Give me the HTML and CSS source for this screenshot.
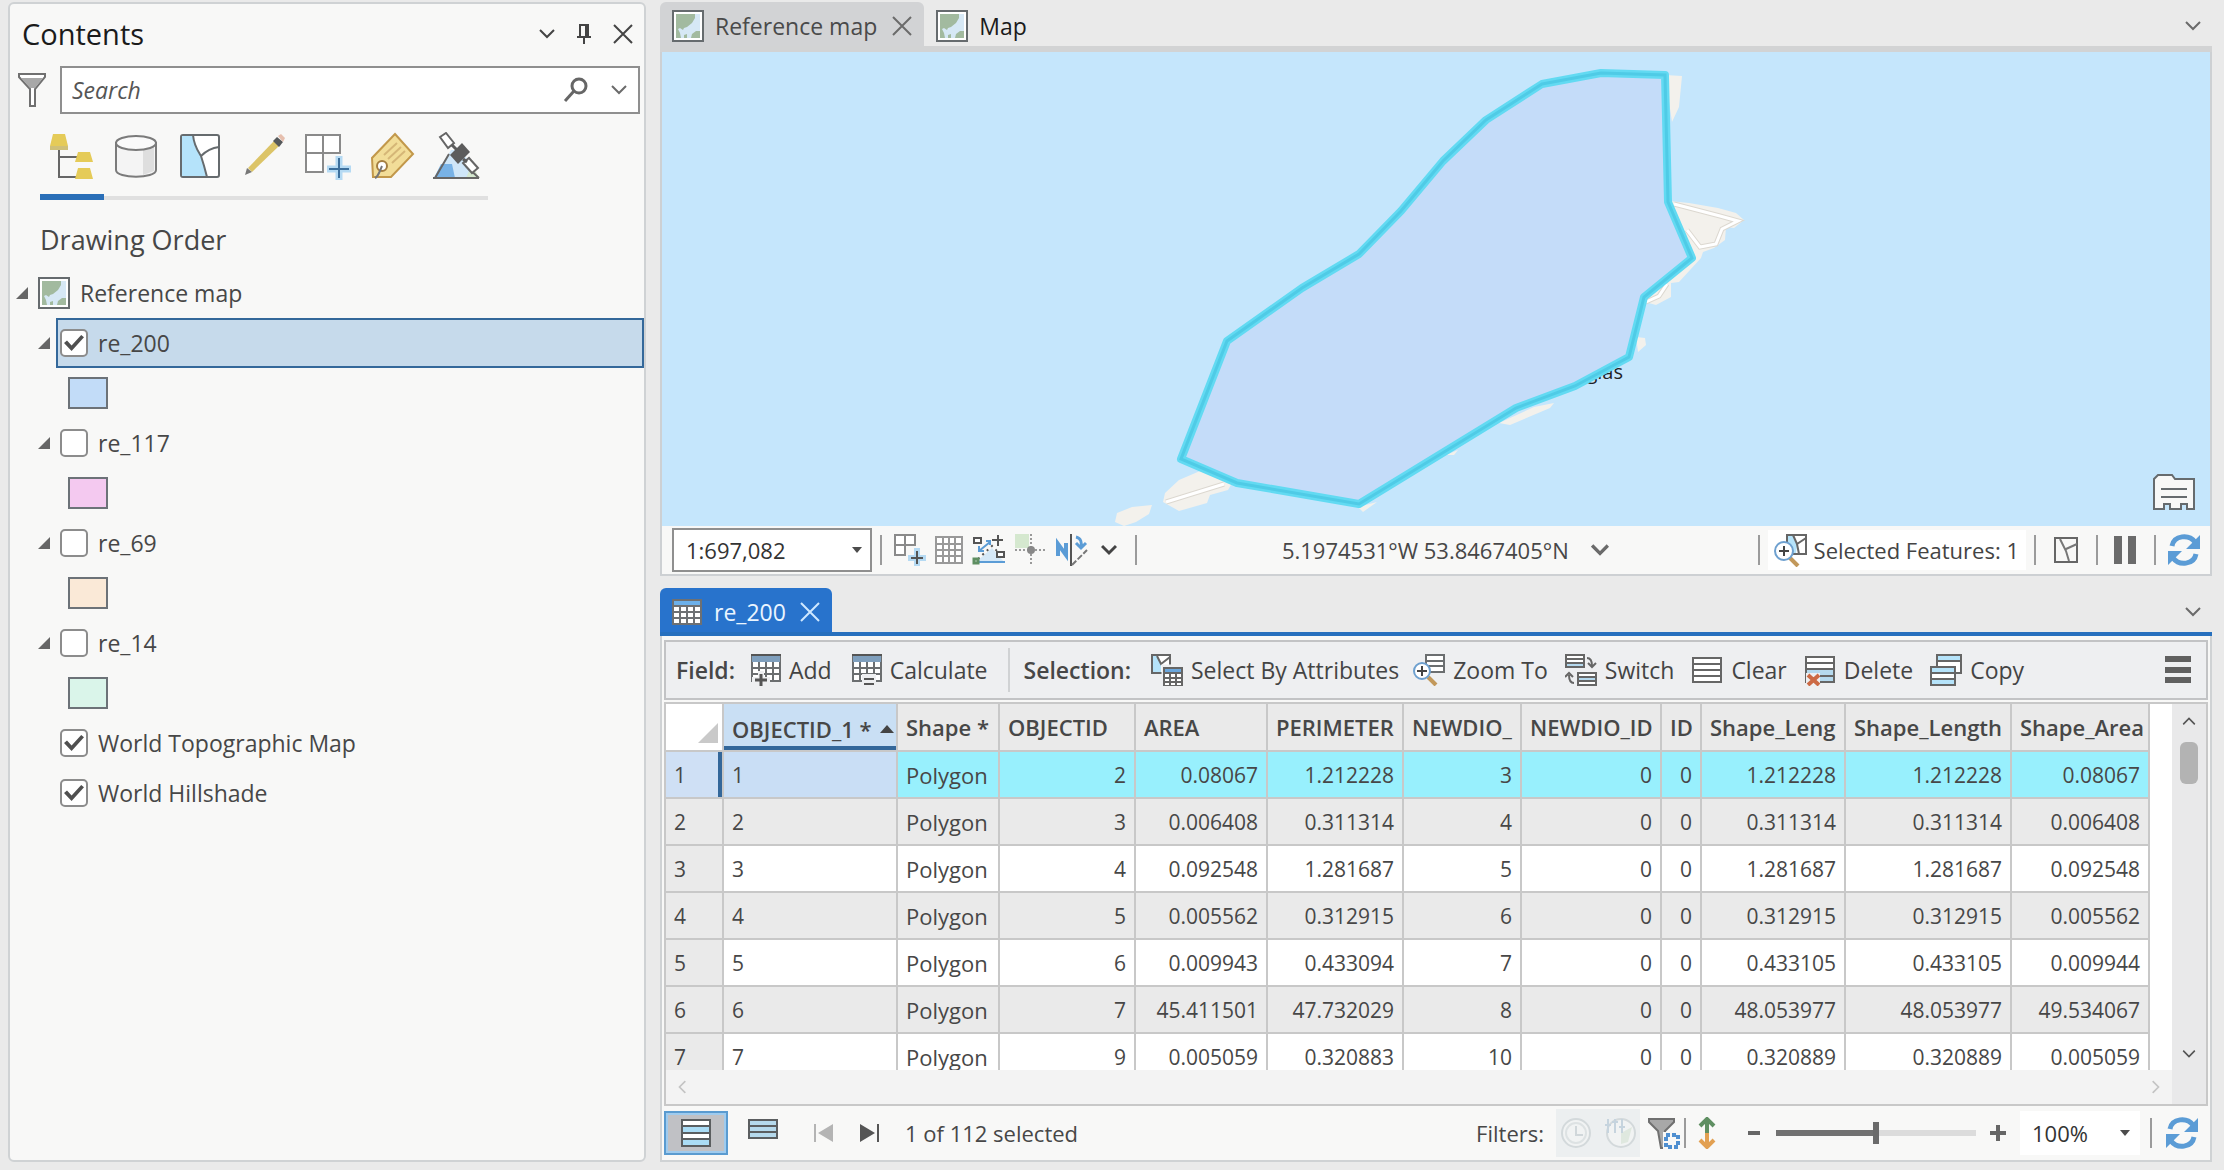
FILE: index.html
```html
<!DOCTYPE html>
<html lang="en">
<head>
<meta charset="utf-8">
<title>Reference map</title>
<link rel="stylesheet" href="styles.css">
</head>
<body>
<svg class="defs" aria-hidden="true">
  <symbol id="map-icon" viewBox="0 0 32 32"><path fill="#fff" stroke="#666b6e" stroke-width="2" d="M1 1h30v30H1z"/><path fill="#d6e8f5" d="M4 4h24v24H4z"/><path fill="#a2ba9f" d="M4 4h19v4l-3 5-5 4-3 1-1 2-3-2-2 1 2 4 1 5H4zM28 21v7h-9l1-4 4-3zM12 25l3-1v4h-3z"/></symbol>
  <symbol id="chevron" viewBox="0 0 16 12"><path fill="none" stroke="currentColor" stroke-width="2" d="M1 2l7 7 7-7"/></symbol>
  <symbol id="chevron-bold" viewBox="0 0 16 12"><path fill="none" stroke="currentColor" stroke-width="3" d="M1 2l7 7 7-7"/></symbol>
  <symbol id="cross" viewBox="0 0 20 20"><path fill="none" stroke="currentColor" stroke-width="2" d="M1 1l18 18M19 1L1 19"/></symbol>
  <symbol id="refresh" viewBox="0 0 32 32"><path fill="none" stroke="#5b9cd6" stroke-width="5" d="M4 12c2-11 17-12 23-4M28 20c-2 11-17 12-23 4"/><path fill="#5b9cd6" d="M32 1v14H18zM0 31V17h14z"/></symbol>
  <symbol id="drop" viewBox="0 0 10 6"><path fill="#4c4c4c" d="M0 0h10L5 6z"/></symbol>
  <symbol id="tri" viewBox="0 0 12 12"><path fill="#666" d="M12 0v12H0z"/></symbol>
</svg>
<div class="app">
  <aside class="contents">
    <header class="contents-head">
      <h1>Contents</h1>
      <button class="bare" aria-label="Options"><svg width="16" height="12"><use href="#chevron"/></svg></button>
      <button class="bare" aria-label="Pin"><svg width="14" height="20" viewBox="0 0 14 20"><path fill="none" stroke="#444" stroke-width="2" d="M3 13V1h8v12M0 13h14M7 13v7M9 1v12"/></svg></button>
      <button class="bare" aria-label="Close"><svg width="20" height="20"><use href="#cross"/></svg></button>
    </header>
    <div class="search-row">
      <svg width="28" height="34" viewBox="0 0 28 34"><path fill="#fff" stroke="#707070" stroke-width="2" d="M1 1h26v3L17 16v17h-5V16L1 4z"/><path fill="#a8a8a8" d="M3 5h22l-8 10h-5z"/></svg>
      <div class="search-box">
        <input type="text" placeholder="Search" aria-label="Search">
        <button class="bare" aria-label="Find"><svg width="26" height="26" viewBox="0 0 26 26"><circle cx="16" cy="9" r="7" fill="none" stroke="#666" stroke-width="3"/><path stroke="#666" stroke-width="3" d="M11 14L2 24"/></svg></button>
        <button class="bare dim" aria-label="Search options"><svg width="16" height="12"><use href="#chevron"/></svg></button>
      </div>
    </div>
    <nav class="tabs" aria-label="List by">
      <button class="on" aria-label="Drawing order"><svg width="48" height="48" viewBox="0 0 48 48"><path fill="none" stroke="#666" stroke-width="2" d="M11 17v28h20M11 25h18"/><path fill="#e5cb58" d="M5 2h12l3 12H2zM30 20h12l3 10H27zM30 36h12l3 11H27z"/><path fill="#cfc078" d="M2 14h18v4H2z"/></svg></button>
      <button aria-label="Data source"><svg width="48" height="48" viewBox="0 0 48 48"><path fill="#f4f4f4" stroke="#7b7b7b" stroke-width="2" d="M4 10v28c0 9 40 9 40 0V10"/><path fill="#dedede" d="M31 17l11-4v26l-11 4z"/><ellipse cx="24" cy="11" rx="20" ry="7" fill="#fafafa" stroke="#7b7b7b" stroke-width="2"/></svg></button>
      <button aria-label="Selection"><svg width="48" height="48" viewBox="0 0 48 48"><rect x="5" y="3" width="38" height="42" rx="2" fill="#fff" stroke="#666b6e" stroke-width="2"/><path fill="#b5e3fa" d="M6 4h11c1 11 5 16 8 20 2 6 4 13 6 20H6z"/><path fill="none" stroke="#666b6e" stroke-width="2" d="M17 3c1 11 5 16 8 21 2 6 4 13 6 21M25 24c5-5 10-8 18-9"/></svg></button>
      <button aria-label="Editing"><svg width="48" height="48" viewBox="0 0 48 48"><path fill="#dcc467" d="M8 36L34 9l5 5-27 26z"/><path fill="#55585a" d="M33 9l4-4 6 5-4 5z"/><path fill="#e6bfae" d="M38 4l3-2 4 4-2 4z"/><path fill="#777" d="M5 43l2-7 5 4z"/></svg></button>
      <button aria-label="Snapping"><svg width="48" height="48" viewBox="0 0 48 48"><path fill="#fff" stroke="#8a8a8a" stroke-width="2" d="M2 3h34v18H19v19H2zM19 3v18M2 21h17"/><path stroke="#b5daf3" stroke-width="7" d="M35 24v24M23 37h24"/><path stroke="#3c6f9c" stroke-width="2" d="M35 26v20M25 37h20"/></svg></button>
      <button aria-label="Labeling"><svg width="48" height="48" viewBox="0 0 48 48"><path fill="#f2dd98" stroke="#c2984b" stroke-width="2" d="M27 2l18 20-22 23H5l-1-19z"/><path stroke="#d5b677" stroke-width="2" d="M16 23l13-12M20 27l13-12M24 31l13-12"/><circle cx="14" cy="34" r="5" fill="#fff" stroke="#a47e40" stroke-width="2"/><path fill="none" stroke="#777" stroke-width="2" d="M14 34c-3 7-4 11-7 12"/></svg></button>
      <button aria-label="Perspective imagery"><svg width="48" height="48" viewBox="0 0 48 48"><path fill="#cfe6f8" d="M19 18L3 46h44L29 18z"/><path fill="#78b2e6" d="M9 32h11l3 14H2z"/><path fill="#d5e8cf" d="M34 46l6-14 7 14z"/><path stroke="#666" stroke-width="2" d="M1 46h46M3 46l14-24M34 34l13 12"/><path fill="#fff" stroke="#666" stroke-width="2" d="M8 5l6-4 8 10-6 5zM31 31l6-5 9 10-6 5z"/><path fill="#5c5c5c" d="M18 23L30 11l8 9-12 12z"/><path stroke="#5c5c5c" stroke-width="3" d="M20 13l5 5M31 27l4 3"/></svg></button>
    </nav>
    <h2>Drawing Order</h2>
    <ul class="tree">
      <li class="row root"><svg width="12" height="12"><use href="#tri"/></svg><svg class="rooticon" width="32" height="32"><use href="#map-icon"/></svg><span>Reference map</span></li>
      <li class="row"><svg width="12" height="12"><use href="#tri"/></svg><label class="item picked"><input type="checkbox" checked>re_200</label></li>
      <li class="row patch"><i class="blue"></i></li>
      <li class="row"><svg width="12" height="12"><use href="#tri"/></svg><label class="item"><input type="checkbox">re_117</label></li>
      <li class="row patch"><i class="pink"></i></li>
      <li class="row"><svg width="12" height="12"><use href="#tri"/></svg><label class="item"><input type="checkbox">re_69</label></li>
      <li class="row patch"><i class="peach"></i></li>
      <li class="row"><svg width="12" height="12"><use href="#tri"/></svg><label class="item"><input type="checkbox">re_14</label></li>
      <li class="row patch"><i class="mint"></i></li>
      <li class="row leaf"><label class="item"><input type="checkbox" checked>World Topographic Map</label></li>
      <li class="row leaf"><label class="item"><input type="checkbox" checked>World Hillshade</label></li>
    </ul>
  </aside>
  <main class="views">
    <section class="pane">
      <div class="strip">
        <div class="tab active"><svg width="32" height="32"><use href="#map-icon"/></svg><span>Reference map</span><button class="bare dim" aria-label="Close tab"><svg width="20" height="20"><use href="#cross"/></svg></button></div>
        <div class="tab"><svg width="32" height="32"><use href="#map-icon"/></svg><span>Map</span></div>
        <button class="bare dim more" aria-label="Tabs"><svg width="16" height="12"><use href="#chevron"/></svg></button>
      </div>
      <div class="map-frame">
        <div class="map">
          <svg class="canvas" viewBox="0 0 1548 474" preserveAspectRatio="xMidYMid slice">
            <g fill="#f3f1ec">
              <path d="M1003 23l17 1-3 31-7 15zM1007 149l20 2 29 5 18 5 8 7-10 8-8-1-1 13-11 8-11 4-2 6-22 24-8 1v14l-15 8-11-3zM974 285l9 1 1 7-8 7zM892 351l-4 5-40 17-11-2 35-16zM796 398l-4 5h-8zM715 450l-14 10-5-5zM538 419l32 12-4 7-18 5-3 8-28 8-16-9 2-9 14-13zM490 453l-3 9-13 8-12 4-9-4 2-9 15-6z"/>
            </g>
            <path fill="none" stroke="#dcd8d0" stroke-width="5" d="M1012 152l46 12 18 5-16 8-6 15-16 3-13-17M504 450l58-18M984 250l13-6 8-12"/>
            <path fill="none" stroke="#fff" stroke-width="3" d="M1012 152l46 12 18 5-16 8-6 15-16 3-13-17M504 450l58-18M984 250l13-6 8-12"/>
            <text x="961" y="327" text-anchor="end" class="place">Douglas</text>
            <path class="feature" d="M880 32l59-11 64 2 3 127 24 56-48 39-15 60-54 29-59 22-157 96-122-21-56-24 46-118 75-53 57-34 42-43 42-50 43-41z"/>
            <path class="feature-core" d="M880 32l59-11 64 2 3 127 24 56-48 39-15 60-54 29-59 22-157 96-122-21-56-24 46-118 75-53 57-34 42-43 42-50 43-41z"/>
          </svg>
          <button class="bare note" aria-label="Map notes"><svg width="44" height="38" viewBox="0 0 44 38"><path fill="#f8f8f7" stroke="#666b6e" stroke-width="2" d="M2 36V6l4-4h14l3 4h19v30h-7v-5h-6v5H18v-5h-6v5z"/><path stroke="#666b6e" stroke-width="2" d="M9 16h26M9 24h26"/></svg></button>
        </div>
        <div class="status">
          <div class="pick scale"><select aria-label="Scale"><option>1:697,082</option></select><svg width="10" height="6"><use href="#drop"/></svg></div>
          <i class="bar"></i>
          <div class="tools">
            <button class="bare" aria-label="Constraints"><svg width="32" height="32" viewBox="0 0 32 32"><path fill="#fff" stroke="#8a8a8a" stroke-width="2" d="M1 1h20v10H11v10H1zM11 1v10M1 11h10"/><path stroke="#b5daf3" stroke-width="6" d="M23 14v18M14 24h18"/><path stroke="#555" stroke-width="2" d="M23 17v13M17 24h12"/></svg></button>
            <button class="bare" aria-label="Grid"><svg width="28" height="28" viewBox="0 0 28 28"><path fill="#fff" stroke="#999" stroke-width="2" d="M1 1h26v26H1zM8 1v26M14 1v26M20 1v26M1 8h26M1 14h26M1 20h26"/></svg></button>
            <button class="bare" aria-label="Snapping"><svg width="34" height="32" viewBox="0 0 34 32"><path fill="#d5e8f7" d="M4 28L20 14l12 14z"/><path fill="#fff" stroke="#555" stroke-width="2" d="M2 4h7v5H2zM25 18h7v5h-7z"/><path fill="none" stroke="#555" stroke-width="2" d="M26 1v11M20 6h11"/><path fill="none" stroke="#5b9cd6" stroke-width="2" d="M7 17l11-9M7 12v5h5M14 7h4v4M3 28h30"/><path fill="none" stroke="#555" stroke-width="2" stroke-dasharray="2 4" d="M6 25l14-13 6 6"/><path fill="#fff" stroke="#5f8f62" stroke-width="3" d="M2 25h4v4H2z"/></svg></button>
            <button class="bare" aria-label="Inference"><svg width="32" height="32" viewBox="0 0 32 32"><path fill="#d5e8cf" d="M0 0h14v14H0z"/><path stroke="#999" stroke-width="2" stroke-dasharray="2 2" d="M16 0v32M0 16h32"/><circle cx="16" cy="16" r="4" fill="#888"/></svg></button>
            <button class="bare" aria-label="North correction"><svg width="32" height="32" viewBox="0 0 32 32"><path fill="none" stroke="#5b9cd6" stroke-width="4" d="M2 22V10l8 11V9"/><path stroke="#555" stroke-width="2" d="M15 0v32"/><path stroke="#777" stroke-width="2" stroke-dasharray="6 2" d="M16 31l15-15"/><path fill="none" stroke="#5b9cd6" stroke-width="3" d="M20 3c5 1 6 6 5 11M20 9l5 5 5-5"/></svg></button>
            <button class="bare strong" aria-label="More tools"><svg width="16" height="12"><use href="#chevron-bold"/></svg></button>
          </div>
          <i class="bar"></i>
          <div class="coords"><span>5.1974531°W 53.8467405°N</span><button class="bare strong dim" aria-label="Units"><svg width="18" height="14" viewBox="0 0 16 12"><use href="#chevron-bold"/></svg></button></div>
          <i class="bar"></i>
          <button class="bare chosen"><svg width="34" height="34" viewBox="0 0 34 34"><path fill="#fff" stroke="#666" stroke-width="2" d="M13 2h19v19H13z"/><path fill="#b5e3fa" d="M14 3h5l4 9-1 8h-8z"/><path fill="none" stroke="#666" stroke-width="2" d="M19 2l4 9 9-6M23 11l2 10"/><path stroke="#c2985b" stroke-width="4" d="M16 25l8 8"/><circle cx="10" cy="18" r="9" fill="#fff" stroke="#6ea0cf" stroke-width="2"/><path stroke="#444" stroke-width="2" d="M10 13v10M5 18h10"/></svg><span>Selected Features: 1</span></button>
          <i class="bar"></i>
          <button class="bare sel" aria-label="Selection chart"><svg width="24" height="26" viewBox="0 0 24 26"><path fill="#f8f8f7" stroke="#666" stroke-width="2" d="M1 1h22v24H1z"/><path fill="none" stroke="#777" stroke-width="2" d="M6 2l6 12 3 10M12 12l11-5"/></svg></button>
          <i class="bar"></i>
          <button class="bare" aria-label="Pause drawing"><svg width="22" height="28" viewBox="0 0 22 28"><path fill="#6b6b6b" d="M0 0h8v28H0zM14 0h8v28h-8z"/></svg></button>
          <i class="bar"></i>
          <button class="bare" aria-label="Refresh"><svg width="32" height="32"><use href="#refresh"/></svg></button>
        </div>
      </div>
    </section>
    <section class="pane">
      <div class="strip table-strip">
        <div class="tab blue-tab"><svg width="30" height="26" viewBox="0 0 30 26"><path fill="#6d7073" d="M0 0h30v26H0z"/><path fill="#6cb0ea" d="M2 2h26v4H2z"/><path fill="#fff" d="M2 8h5v4H2zM9 8h5v4H9zM16 8h5v4h-5zM23 8h5v4h-5zM2 14h5v4H2zM9 14h5v4H9zM16 14h5v4h-5zM23 14h5v4h-5zM2 20h5v4H2zM9 20h5v4H9zM16 20h5v4h-5zM23 20h5v4h-5z"/></svg><span>re_200</span><button class="bare" aria-label="Close table"><svg width="20" height="20"><use href="#cross"/></svg></button></div>
        <button class="bare dim more" aria-label="Tables"><svg width="16" height="12"><use href="#chevron"/></svg></button>
      </div>
      <div class="table-frame">
        <div class="toolbar">
          <b>Field:</b>
          <button class="bare"><svg width="30" height="32" viewBox="0 0 30 32"><path fill="#fff" stroke="#6b6e70" stroke-width="2" d="M1 1h28v26H1zM1 14h28M1 20h28M8 8v19M15 8v19M22 8v19"/><path fill="#7f9fbd" d="M1 2h28v6H1z"/><path fill="#555" d="M0 0h30v2H0z"/><path stroke="#eeeff1" stroke-width="6" d="M10 17v15M1 26h18"/><path stroke="#555" stroke-width="3" d="M10 20v12M4 26h12"/></svg>Add</button>
          <button class="bare calc"><svg width="30" height="32" viewBox="0 0 30 32"><path fill="#fff" stroke="#6b6e70" stroke-width="2" d="M1 1h28v26H1zM1 14h28M1 20h28M8 8v19M15 8v19M22 8v19"/><path fill="#7f9fbd" d="M1 2h28v6H1z"/><path fill="#555" d="M0 0h30v2H0z"/><path fill="#eeeff1" d="M10 20h14v12H10z"/><path stroke="#555" stroke-width="2" d="M12 25h10M12 30h10"/></svg>Calculate</button>
          <i class="bar tall"></i>
          <b>Selection:</b>
          <button class="bare attr"><svg width="32" height="32" viewBox="0 0 32 32"><path fill="#fff" stroke="#666" stroke-width="2" d="M1 1h18v18H1z"/><path fill="#b5e3fa" d="M2 2h4l4 8v8H2z"/><path fill="none" stroke="#666" stroke-width="2" d="M6 2l4 8 9-7"/><path fill="#fff" stroke="#eeeff1" stroke-width="3" d="M12 12h20v20H12z"/><path fill="#666" d="M12 13h20v19H12z"/><path fill="#6ba7dd" d="M14 15h16v3H14z"/><path fill="#fff" d="M14 20h4v3h-4zM20 20h4v3h-4zM26 20h4v3h-4zM14 25h4v2h-4zM20 25h4v2h-4zM26 25h4v2h-4zM14 29h4v2h-4zM20 29h4v2h-4zM26 29h4v2h-4z"/></svg>Select By Attributes</button>
          <button class="bare zoomto"><svg width="32" height="32" viewBox="0 0 32 32"><path fill="#fff" stroke="#6b6e70" stroke-width="2" d="M13 1h18v17H13zM13 7h18M13 12h18"/><path stroke="#c2985b" stroke-width="4" d="M15 23l8 8"/><circle cx="9" cy="17" r="8" fill="#fff" stroke="#6ea0cf" stroke-width="2"/><path stroke="#444" stroke-width="2" d="M9 12v10M4 17h10"/></svg>Zoom To</button>
          <button class="bare"><svg width="32" height="32" viewBox="0 0 32 32"><path fill="#fff" stroke="#666" stroke-width="2" d="M1 1h18v12H1zM13 19h18v12H13z"/><path fill="#b5d9ee" d="M2 10h16v2H2zM14 24h16v2H14z"/><path stroke="#666" stroke-width="2" d="M1 5h18M1 9h18M13 23h18M13 27h18"/><path fill="none" stroke="#666" stroke-width="2" d="M22 4c4 0 5 3 5 8M23 9l4 4 4-4M9 29c-4 0-5-3-5-8M0 23l4-4 4 4"/></svg>Switch</button>
          <button class="bare"><svg width="32" height="28" viewBox="0 0 32 28"><path fill="#fff" stroke="#666" stroke-width="2" d="M2 2h28v24H2zM2 8h28M2 14h28M2 20h28"/></svg>Clear</button>
          <button class="bare"><svg width="32" height="32" viewBox="0 0 32 32"><path fill="#fff" stroke="#666" stroke-width="2" d="M2 3h28v25H2z"/><path fill="#b5d9ee" d="M3 16h26v11H3z"/><path stroke="#666" stroke-width="2" d="M2 9h28M2 15h28M2 22h28"/><path fill="#eeeff1" d="M2 19h14v13H2z"/><path stroke="#cc6a45" stroke-width="4" d="M4 21l11 10M15 21L4 31"/></svg>Delete</button>
          <button class="bare"><svg width="32" height="32" viewBox="0 0 32 32"><path fill="#fff" stroke="#666" stroke-width="2" d="M7 1h24v18H7z"/><path fill="#b5e3fa" d="M8 2h22v5H8z"/><path stroke="#666" stroke-width="2" d="M7 7h24"/><path fill="#fff" stroke="#666" stroke-width="2" d="M1 13h24v18H1z"/><path fill="#b5e3fa" d="M2 14h22v5H2zM2 26h22v4H2z"/><path stroke="#666" stroke-width="2" d="M1 19h24M1 25h24"/></svg>Copy</button>
          <button class="bare burger" aria-label="Menu"><svg width="28" height="28" viewBox="0 0 28 28"><path fill="#606060" d="M1 0h26v6H1zM1 11h26v6H1zM1 21h26v6H1z"/></svg></button>
        </div>
        <div class="grid-box">
          <div class="scroller">
            <table>
              <colgroup><col class="w58"><col class="w174"><col class="w102"><col class="w136"><col class="w132"><col class="w136"><col class="w118"><col class="w140"><col class="w40"><col class="w144"><col class="w166"><col class="w138"></colgroup>
              <thead><tr><th class="corner"><svg width="20" height="20" viewBox="0 0 20 20"><path fill="#c9c9c9" d="M20 0v20H0z"/></svg></th><th class="sorted"><span>OBJECTID_1 *</span><svg width="14" height="8" viewBox="0 0 14 8"><path fill="#444" d="M7 0l7 8H0z"/></svg></th><th>Shape *</th><th>OBJECTID</th><th>AREA</th><th>PERIMETER</th><th>NEWDIO_</th><th>NEWDIO_ID</th><th>ID</th><th>Shape_Leng</th><th>Shape_Length</th><th>Shape_Area</th></tr></thead>
              <tbody>
                <tr class="hit"><th>1</th><td>1</td><td>Polygon</td><td>2</td><td>0.08067</td><td>1.212228</td><td>3</td><td>0</td><td>0</td><td>1.212228</td><td>1.212228</td><td>0.08067</td></tr>
                <tr><th>2</th><td>2</td><td>Polygon</td><td>3</td><td>0.006408</td><td>0.311314</td><td>4</td><td>0</td><td>0</td><td>0.311314</td><td>0.311314</td><td>0.006408</td></tr>
                <tr><th>3</th><td>3</td><td>Polygon</td><td>4</td><td>0.092548</td><td>1.281687</td><td>5</td><td>0</td><td>0</td><td>1.281687</td><td>1.281687</td><td>0.092548</td></tr>
                <tr><th>4</th><td>4</td><td>Polygon</td><td>5</td><td>0.005562</td><td>0.312915</td><td>6</td><td>0</td><td>0</td><td>0.312915</td><td>0.312915</td><td>0.005562</td></tr>
                <tr><th>5</th><td>5</td><td>Polygon</td><td>6</td><td>0.009943</td><td>0.433094</td><td>7</td><td>0</td><td>0</td><td>0.433105</td><td>0.433105</td><td>0.009944</td></tr>
                <tr><th>6</th><td>6</td><td>Polygon</td><td>7</td><td>45.411501</td><td>47.732029</td><td>8</td><td>0</td><td>0</td><td>48.053977</td><td>48.053977</td><td>49.534067</td></tr>
                <tr><th>7</th><td>7</td><td>Polygon</td><td>9</td><td>0.005059</td><td>0.320883</td><td>10</td><td>0</td><td>0</td><td>0.320889</td><td>0.320889</td><td>0.005059</td></tr>
              </tbody>
            </table>
          </div>
          <div class="vbar"><svg class="up" width="14" height="10" viewBox="0 0 16 12"><use href="#chevron"/></svg><i></i><svg width="14" height="10" viewBox="0 0 16 12"><use href="#chevron"/></svg></div>
          <div class="hbar"><svg class="left" width="14" height="10" viewBox="0 0 16 12"><use href="#chevron"/></svg><svg class="right" width="14" height="10" viewBox="0 0 16 12"><use href="#chevron"/></svg></div>
        </div>
        <footer class="foot">
          <button class="bare showall" aria-label="Show all records"><svg width="30" height="28" viewBox="0 0 30 28"><path fill="#fff" d="M1 1h28v26H1z"/><path fill="#aadcf5" d="M2 8h26v5H2zM2 21h26v5H2z"/><path fill="none" stroke="#5b5e60" stroke-width="2" d="M1 1h28v26H1zM1 7h28M1 14h28M1 20h28"/></svg></button>
          <button class="bare showsel" aria-label="Show selected records"><svg width="30" height="20" viewBox="0 0 30 20"><path fill="#b5d9ec" stroke="#5b5e60" stroke-width="2" d="M1 1h28v18H1zM1 7h28M1 13h28"/></svg></button>
          <button class="bare" aria-label="Previous"><svg width="20" height="18" viewBox="0 0 20 18"><path fill="#b4b4b4" d="M0 0h2v18H0zM19 0v18L4 9z"/></svg></button>
          <button class="bare next" aria-label="Next"><svg width="20" height="18" viewBox="0 0 20 18"><path fill="#555" d="M18 0h2v18h-2zM1 0v18l15-9z"/></svg></button>
          <span class="count">1 of 112 selected</span>
          <span class="filters">Filters:</span>
          <div class="off">
            <button class="bare" disabled aria-label="Time filter"><svg width="32" height="32" viewBox="0 0 32 32"><circle cx="16" cy="16" r="14" fill="#f1f3f3" stroke="#d3d9db" stroke-width="2"/><circle cx="16" cy="16" r="10" fill="none" stroke="#dde2e3" stroke-width="2"/><path fill="none" stroke="#d0d7da" stroke-width="2" d="M16 9v9h7"/></svg></button>
            <button class="bare" disabled aria-label="Range filter"><svg width="32" height="32" viewBox="0 0 32 32"><circle cx="17" cy="16" r="14" fill="#f1f3f3" stroke="#d3d9db" stroke-width="2"/><path fill="#dfe8df" d="M17 16l11-6-4 15-7 2z"/><path stroke="#c6d4de" stroke-width="2" d="M4 2v14M11 2v14M18 2v14M1 8h6M8 5h6M15 10h6"/></svg></button>
          </div>
          <button class="bare" aria-label="Filter by selection"><svg width="32" height="32" viewBox="0 0 32 32"><path fill="#a8a8a8" stroke="#707070" stroke-width="2" d="M1 2h25v3l-9 9v17h-4L10 14 1 5z"/><path fill="#f8f8f7" d="M15 15h17v17H15z"/><path fill="none" stroke="#4f8fd0" stroke-width="4" stroke-dasharray="4 2" d="M18 18h12v12H18z"/></svg></button>
          <i class="bar snug"></i>
          <button class="bare updown" aria-label="Sort"><svg width="18" height="32" viewBox="0 0 18 32"><path fill="none" stroke="#5f8f62" stroke-width="4" d="M9 16V3M2 9l7-7 7 7"/><path fill="none" stroke="#e2a052" stroke-width="4" d="M9 16v13M2 23l7 7 7-7"/></svg></button>
          <button class="bare minus" aria-label="Zoom out"><svg width="12" height="4"><path fill="#666" d="M0 0h12v4H0z"/></svg></button>
          <input type="range" min="0" max="100" value="50" aria-label="Zoom">
          <button class="bare plus" aria-label="Zoom in"><svg width="16" height="16" viewBox="0 0 16 16"><path fill="#666" d="M6 0h4v6h6v4h-6v6H6v-6H0V6h6z"/></svg></button>
          <div class="pick zoom"><select aria-label="Zoom level"><option>100%</option></select><svg width="10" height="6"><use href="#drop"/></svg></div>
          <i class="bar last"></i>
          <button class="bare" aria-label="Reload table"><svg width="32" height="32"><use href="#refresh"/></svg></button>
        </footer>
      </div>
    </section>
  </main>
</div>
</body>
</html>
```
FILE: styles.css
```css
* { box-sizing: border-box; }
body { margin: 0; background: #eaeaea; color: #474747; font: 23px/30px "Open Sans", "Noto Sans", sans-serif; }
svg { display: block; flex: none; }
button, input, select { font: inherit; color: inherit; }
h1, h2, ul { margin: 0; padding: 0; font-weight: 400; }
.defs { width: 0; height: 0; position: absolute; }
.app { display: flex; gap: 14px; height: 100vh; min-height: 900px; padding: 2px 12px 8px 8px; }
.bare { display: flex; align-items: center; gap: 8px; padding: 0; border: 0; background: none; color: #444; white-space: nowrap; flex: none; }
.dim { color: #6b6b6b; }
.bar { flex: none; width: 2px; height: 30px; background: #9b9b9b; }

.contents { flex: none; width: 638px; border: 2px solid #cfd2d4; border-radius: 6px; background: #f8f8f7; }
.contents-head { display: flex; align-items: center; height: 62px; padding: 0 11px 2px 12px; gap: 22px; }
.contents-head h1 { flex: 1; font-size: 29px; line-height: 40px; color: #1b1b1b; }
.search-row { display: flex; align-items: center; padding: 0 4px 0 8px; gap: 14px; }
.search-box { flex: 1; display: flex; align-items: center; height: 48px; border: 2px solid #8f8f8f; background: #fff; padding: 0 11px 0 10px; gap: 22px; }
.search-box input { flex: 1; min-width: 0; border: 0; padding: 0; outline: 0; background: none; }
.search-box input::placeholder { color: #555; font-style: italic; opacity: 1; }
.tabs { display: flex; width: 448px; margin: 14px 0 0 30px; }
.tabs button { width: 64px; height: 72px; padding: 0 8px 12px; border: 0; border-bottom: 4px solid #e0e0e0; background: none; }
.tabs .on { border-bottom: 6px solid #2a6fb8; padding-bottom: 10px; }
.contents h2 { margin: 20px 0 0 30px; font-size: 27px; line-height: 40px; }
.tree { list-style: none; margin-top: 8px; }
.row { display: flex; align-items: center; height: 50px; padding-left: 28px; gap: 6px; }
.root { padding-left: 6px; gap: 10px; }
.item { flex: 1; display: flex; align-items: center; gap: 10px; height: 50px; padding-left: 2px; border: 2px solid transparent; }
.picked { background: #c6daeb; border-color: #34689a; }
.leaf { padding-left: 46px; }
.patch { padding-left: 58px; }
.patch i { width: 40px; height: 32px; border: 2px solid #6c7278; }
.blue { background: #c2dcf8; }
.pink { background: #f4c9f0; }
.peach { background: #fae9d7; }
.mint { background: #daf5ea; }
input[type=checkbox] { appearance: none; flex: none; display: grid; place-content: center; width: 28px; height: 28px; margin: 0; border: 2px solid #8c8c8c; border-radius: 5px; background: #fff; }
input[type=checkbox]:checked::before { content: ""; width: 20px; height: 16px; background: #505050; clip-path: polygon(0 50%, 15% 35%, 38% 65%, 86% 0, 100% 14%, 38% 100%); }

.views { flex: 1; min-width: 0; display: flex; flex-direction: column; gap: 12px; }
.pane { flex: 1; min-height: 0; display: flex; flex-direction: column; }
.strip { flex: none; display: flex; height: 50px; border-bottom: 6px solid #d2d3d4; }
.tab { display: flex; align-items: center; padding: 4px 12px 0; gap: 11px; color: #1b1b1b; }
.tab .bare { margin-left: 4px; }
.active { background: #d2d3d5; border-radius: 6px 6px 0 0; color: #4a4a4a; }
.more { margin: 4px 11px 0 auto; }
.map-frame { flex: 1; min-height: 0; display: flex; flex-direction: column; border: 2px solid #cdd0d3; border-top: 0; }
.map { flex: 1; min-height: 0; position: relative; background: #c5e6fc; }
.canvas { width: 100%; height: 100%; }
.place { font-size: 20px; fill: #222; stroke: #222; stroke-width: 0; }
.feature { fill: #c4dcf9; stroke: #62daf2; stroke-width: 8; stroke-linejoin: round; }
.feature-core { fill: none; stroke: #4fcbe6; stroke-width: 3; }
.note { position: absolute; right: 14px; bottom: 15px; }
.status { flex: none; display: flex; align-items: center; height: 48px; padding: 0 10px; background: #f8f8f7; font-size: 22px; }
.pick { flex: none; display: grid; align-items: center; background: #fff; }
.pick select, .pick svg { grid-area: 1 / 1; }
.pick select { appearance: none; border: 0; outline: 0; background: none; height: 100%; color: #333; }
.pick svg { justify-self: end; pointer-events: none; }
.scale { width: 200px; height: 44px; border: 2px solid #8f8f8f; padding-right: 8px; }
.scale select { padding: 0 12px; }
.scale + .bar { margin: 0 12px 0 8px; }
.tools { display: flex; align-items: center; gap: 9px; margin-right: 18px; }
.strong { margin-left: 4px; }
.coords { flex: 1; display: flex; align-items: center; justify-content: center; gap: 18px; padding-right: 4px; }
.chosen { height: 40px; margin: 0 8px; padding: 0 7px 0 6px; background: #fff; gap: 6px; }
.sel { margin: 0 18px; }
.sel ~ .bare { margin: 0 18px 0 16px; }
.status > .bare:last-child { margin: 0 0 0 12px; }

.table-strip { height: 48px; border-bottom: 4px solid #2770be; }
.blue-tab { gap: 12px; background: #2873cc; border-radius: 6px 6px 0 0; color: #eaf5ff; }
.blue-tab .bare { margin-left: 2px; color: #cfe8ff; }
.table-frame { flex: 1; min-height: 0; display: flex; flex-direction: column; border: 2px solid #cfd2d4; border-top: 0; padding: 4px 2px 0; background: #f8f8f7; }
.toolbar { flex: none; display: flex; align-items: center; height: 60px; border: 2px solid #c2c3c5; padding: 0 14px 0 10px; background: #eeeff1; }
.toolbar b, thead th { font-weight: 600; }
.toolbar .bare { margin-left: 17px; }
.toolbar b + .bare { margin-left: 16px; }
.toolbar .calc { margin-left: 20px; }
.toolbar b + .attr { margin-left: 20px; }
.toolbar .zoomto { margin-left: 14px; }
.tall { height: 44px; margin: 0 14px 0 20px; background: #d0d2d4; }
.toolbar .burger { margin-left: auto; }
.grid-box { flex: 1; min-height: 0; margin-top: 2px; display: grid; grid-template: minmax(0, 1fr) 34px / minmax(0, 1fr) 34px; border: 2px solid #c8c8c8; }
.scroller { overflow: hidden; background: #fff; }
table { width: 1484px; table-layout: fixed; border-collapse: separate; border-spacing: 0; font-size: 21px; }
.w58 { width: 58px; } .w174 { width: 174px; } .w102 { width: 102px; } .w136 { width: 136px; } .w132 { width: 132px; } .w118 { width: 118px; }
.w140 { width: 140px; } .w40 { width: 40px; } .w144 { width: 144px; } .w166 { width: 166px; } .w138 { width: 138px; }
th, td { height: 47px; padding: 0 8px; border: solid #c8c8c8; border-width: 0 2px 2px 0; text-align: right; white-space: nowrap; font-weight: 400; }
thead th { height: 48px; text-align: left; background: #eaeaea; font-size: 22px; }
thead .corner { background: #fff; padding: 12px 0 0 32px; }
thead .sorted { background: #c9dff4; box-shadow: inset 0 -4px #33679a; }
.sorted span, .sorted svg { display: inline-block; vertical-align: middle; }
.sorted svg { margin-left: 8px; }
tbody th { background: #eaeaea; text-align: left; }
td:nth-child(2), td:nth-child(3) { text-align: left; }
td:nth-child(3) { font-size: 22px; }
tbody tr:nth-child(even) td { background: #eaeaea; }
.hit td { background: #98f0fd; }
.hit td:nth-child(2) { background: #c9def5; }
.hit th { background: #cfe0f5; box-shadow: inset -4px 0 #33679a; }
.vbar { grid-row: 1 / 3; grid-column: 2; display: flex; flex-direction: column; align-items: center; padding: 12px 0 45px; background: #e9e9ea; color: #555; }
.vbar i { width: 18px; height: 42px; margin: 16px 0 auto; border-radius: 6px; background: #b3b3b3; }
.up { transform: rotate(180deg); }
.hbar { display: flex; align-items: center; justify-content: space-between; padding: 0 9px; background: #f3f3f3; color: #c4c4c4; }
.left { transform: rotate(90deg); }
.right { transform: rotate(-90deg); }
.foot { flex: none; display: flex; align-items: center; height: 54px; font-size: 22px; }
.showall { width: 64px; height: 44px; justify-content: center; background: #c0c1c5; border: 2px solid #5a9bd0; box-shadow: inset 0 0 0 2px #9fcbee; }
.showsel { margin: 0 36px 8px 20px; }
.next { margin: 0 26px 0 25px; }
.count { flex: 1; }
.off { display: flex; align-items: center; gap: 12px; height: 48px; margin: 0 8px 0 12px; padding: 0 4px; background: #eceff0; }
.snug { margin-left: 4px; }
.updown { margin: 0 32px 0 12px; }
input[type=range] { appearance: none; width: 200px; height: 22px; margin: 0 14px 0 16px; background: linear-gradient(90deg, #717171 50%, #dcdcdc 50%) center / 100% 6px no-repeat; }
input[type=range]::-webkit-slider-thumb { appearance: none; width: 6px; height: 22px; background: #6b6b6b; }
.zoom { width: 120px; height: 44px; margin: 0 10px 0 14px; padding-right: 10px; }
.zoom select { padding: 0 12px; }
.last { margin-right: 14px; }
.foot > .bare:last-child { margin-right: 10px; }
```
